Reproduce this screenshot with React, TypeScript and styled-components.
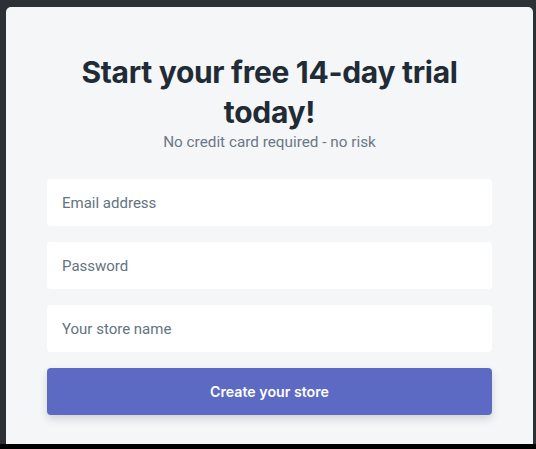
import styled, { createGlobalStyle } from "styled-components";

const GlobalStyle = createGlobalStyle`
	html, body {
		margin: 0;
		padding: 0;
		background: #000;
	}
	* {
		box-sizing: border-box;
	}
`;

const Frame = styled.div`
	width: 536px;
	height: 449px;
	display: flex;
	flex-direction: column;
	background: #000;
`;

const Backdrop = styled.div`
	flex: 1;
	display: flex;
	padding: 7px 3px 0 6px;
	background: #2d3034;
`;

const Panel = styled.div`
	flex: 1;
	display: flex;
	flex-direction: column;
	align-items: center;
	padding: 45px 41px 0;
	background: #f4f6f8;
	border-radius: 5px 5px 0 0;
`;

const BottomBar = styled.div`
	height: 5px;
	background: #000;
`;

const Title = styled.h1`
	margin: 0;
	font-family: "Inter", "Liberation Sans", sans-serif;
	font-weight: 700;
	font-size: 30px;
	line-height: 40px;
	letter-spacing: -0.3px;
	color: #212b36;
	text-align: center;
	width: 400px;
`;

const Subtitle = styled.p`
	margin: 0 0 27px;
	font-family: "Roboto", "Liberation Sans", sans-serif;
	font-size: 15.3px;
	line-height: 20px;
	color: #6b7885;
	text-align: center;
`;

const Form = styled.form`
	width: 100%;
	display: flex;
	flex-direction: column;
	gap: 16px;
`;

const Field = styled.input`
	width: 100%;
	height: 47px;
	padding: 0 15px;
	border: none;
	border-radius: 4px;
	background: #fff;
	font-family: "Roboto", "Liberation Sans", sans-serif;
	font-size: 15px;
	color: #212b36;
	outline: none;

	&::placeholder {
		color: #637381;
	}
`;

const Submit = styled.button`
	width: 100%;
	height: 47px;
	border: none;
	border-radius: 4px;
	background: #5c6ac4;
	color: #fff;
	font-family: "Inter", "Liberation Sans", sans-serif;
	font-weight: 600;
	font-size: 14.2px;
	box-shadow: 0 4px 8px rgba(0, 0, 0, 0.15);
	cursor: pointer;
`;

function App() {
	return (
		<>
			<GlobalStyle />
			<Frame>
				<Backdrop>
					<Panel>
						<Title>Start your free 14-day trial today!</Title>
						<Subtitle>No credit card required - no risk</Subtitle>
						<Form onSubmit={(e) => e.preventDefault()}>
							<Field type='email' placeholder='Email address' />
							<Field type='password' placeholder='Password' />
							<Field type='text' placeholder='Your store name' />
							<Submit type='submit'>Create your store</Submit>
						</Form>
					</Panel>
				</Backdrop>
				<BottomBar />
			</Frame>
		</>
	);
}

export default App;
